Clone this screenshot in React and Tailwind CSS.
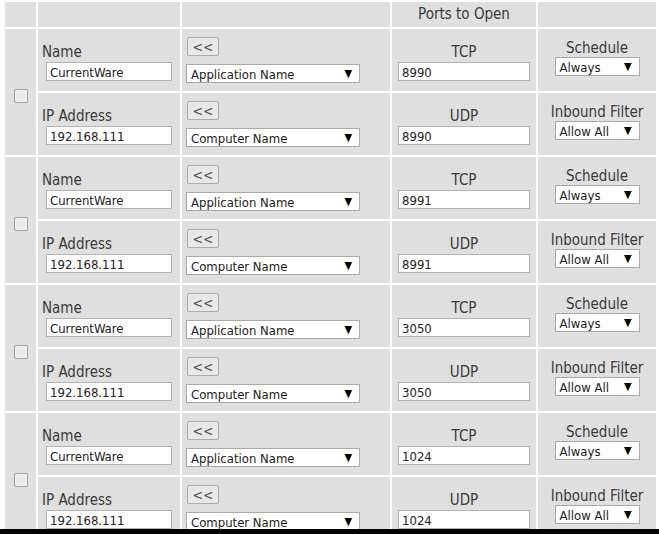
import React from "react";

const groups = [
  { port: "8990" },
  { port: "8991" },
  { port: "3050" },
  { port: "1024" },
];

function Field({ value, w }) {
  return (
    <div
      className={`${w} h-[19px] bg-white border border-[#b5b5b5] pl-[3px] pt-[1px] text-[13px] leading-[17px] text-[#222] whitespace-nowrap overflow-hidden`}
    >
      {value}
    </div>
  );
}

function Select({ value, w }) {
  return (
    <div
      className={`${w} h-[19px] bg-white border border-[#a9a9a9] pl-[4px] pr-[7px] flex items-center justify-between text-[13px] leading-[17px] text-[#222] whitespace-nowrap`}
    >
      <span className="pt-[2px]">{value}</span>
      <span className="text-[11px] text-black">▼</span>
    </div>
  );
}

function Btn() {
  return (
    <div className="w-[32px] h-[19px] bg-[#e7e7e7] border border-[#ababab] rounded-[2px] flex items-center justify-center text-[14px] text-[#4a4f63] leading-none">
      &lt;&lt;
    </div>
  );
}

export default function App() {
  return (
    <div className="w-[659px] h-[534px] overflow-hidden flex flex-col bg-white font-['DejaVu_Sans_Condensed','Noto_Sans',sans-serif]">
      <div className="flex-1 overflow-hidden pl-[3px]">
        <table className="table-fixed w-[655px] border-separate border-spacing-[2px]">
          <colgroup>
            <col className="w-[31px]" />
            <col className="w-[142px]" />
            <col className="w-[208px]" />
            <col className="w-[144px]" />
            <col className="w-[118px]" />
          </colgroup>
          <thead>
            <tr className="h-[25px]">
              <th className="bg-[#dfdfdf] p-0"></th>
              <th className="bg-[#dfdfdf] p-0"></th>
              <th className="bg-[#dfdfdf] p-0"></th>
              <th className="bg-[#dfdfdf] p-0 font-normal text-[15px] text-[#3a3a3a] text-center">
                Ports to Open
              </th>
              <th className="bg-[#dfdfdf] p-0"></th>
            </tr>
          </thead>
          <tbody>
            {groups.map((g, i) => (
              <React.Fragment key={i}>
                <tr className="h-[62px]">
                  <td rowSpan={2} className="bg-[#dfdfdf] p-0 align-middle">
                    <div className="mx-auto mt-[7px] w-[14px] h-[14px] rounded-[2px] border border-[#a3a3a3] bg-[#ececec]" />
                  </td>
                  <td className="bg-[#dfdfdf] pl-[4px] pt-[2px] align-middle">
                    <div className="text-[15px] leading-[20px] text-[#3a3a3a]">Name</div>
                    <div className="ml-[4px]">
                      <Field value="CurrentWare" w="w-[126px]" />
                    </div>
                  </td>
                  <td className="bg-[#dfdfdf] pl-[4px] align-middle">
                    <div className="ml-[1px]">
                      <Btn />
                    </div>
                    <div className="mt-[8px]">
                      <Select value="Application Name" w="w-[174px]" />
                    </div>
                  </td>
                  <td className="bg-[#dfdfdf] pt-[2px] align-middle">
                    <div className="text-[15px] leading-[20px] text-[#3a3a3a] text-center">TCP</div>
                    <div className="flex justify-center">
                      <Field value={g.port} w="w-[132px]" />
                    </div>
                  </td>
                  <td className="bg-[#dfdfdf] pb-[4px] align-middle">
                    <div className="text-[15px] leading-[17px] text-[#3a3a3a] text-center">Schedule</div>
                    <div className="flex justify-center">
                      <Select value="Always" w="w-[85px]" />
                    </div>
                  </td>
                </tr>
                <tr className="h-[62px]">
                  <td className="bg-[#dfdfdf] pl-[4px] pt-[2px] align-middle">
                    <div className="text-[15px] leading-[20px] text-[#3a3a3a]">IP Address</div>
                    <div className="ml-[4px]">
                      <Field value="192.168.111" w="w-[126px]" />
                    </div>
                  </td>
                  <td className="bg-[#dfdfdf] pl-[4px] align-middle">
                    <div className="ml-[1px]">
                      <Btn />
                    </div>
                    <div className="mt-[8px]">
                      <Select value="Computer Name" w="w-[174px]" />
                    </div>
                  </td>
                  <td className="bg-[#dfdfdf] pt-[2px] align-middle">
                    <div className="text-[15px] leading-[20px] text-[#3a3a3a] text-center">UDP</div>
                    <div className="flex justify-center">
                      <Field value={g.port} w="w-[132px]" />
                    </div>
                  </td>
                  <td className="bg-[#dfdfdf] pb-[4px] align-middle">
                    <div className="text-[15px] leading-[17px] text-[#3a3a3a] text-center">Inbound Filter</div>
                    <div className="flex justify-center">
                      <Select value="Allow All" w="w-[85px]" />
                    </div>
                  </td>
                </tr>
              </React.Fragment>
            ))}
          </tbody>
        </table>
      </div>
      <div className="h-[5px] bg-black shrink-0" />
    </div>
  );
}
